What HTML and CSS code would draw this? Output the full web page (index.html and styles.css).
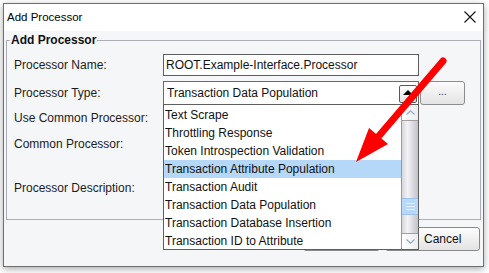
FILE: index.html
```html
<!DOCTYPE html>
<html lang="en">
<head>
    <meta charset="UTF-8">
    <title>Add Processor</title>
    <link rel="stylesheet" href="styles.css">
</head>
<body>
    <div class="window">
        <div class="titlebar">
            <span class="title">Add Processor</span>
            <svg class="close" width="12" height="12" viewBox="0 0 12 12">
                <path d="M0.5 0.5 L11.5 11.5 M11.5 0.5 L0.5 11.5" stroke="#111" stroke-width="1.1" fill="none"/>
            </svg>
        </div>
        <div class="body">
            <fieldset class="group">
                <legend>Add Processor</legend>
                <div class="row row-name">
                    <label>Processor Name:</label>
                    <div class="field">ROOT.Example-Interface.Processor</div>
                </div>
                <div class="row row-type">
                    <label>Processor Type:</label>
                    <div class="combo">
                        <span class="combo-text">Transaction Data Population</span>
                        <span class="combo-btn"><span class="tri-up"></span></span>
                        <div class="dropdown">
                            <ul class="options">
                                <li>Text Scrape</li>
                                <li>Throttling Response</li>
                                <li>Token Introspection Validation</li>
                                <li class="selected">Transaction Attribute Population</li>
                                <li>Transaction Audit</li>
                                <li>Transaction Data Population</li>
                                <li>Transaction Database Insertion</li>
                                <li>Transaction ID to Attribute</li>
                            </ul>
                            <div class="scrollbar">
                                <div class="sb-btn">
                                    <svg width="9" height="5" viewBox="0 0 9 5"><polyline points="0.5,4.5 4.5,0.8 8.5,4.5" fill="none" stroke="#93abc6" stroke-width="1.2"/></svg>
                                </div>
                                <div class="sb-track">
                                    <div class="sb-thumb"><i></i><i></i><i></i></div>
                                </div>
                                <div class="sb-btn">
                                    <svg width="9" height="5" viewBox="0 0 9 5"><polyline points="0.5,0.5 4.5,4.2 8.5,0.5" fill="none" stroke="#93abc6" stroke-width="1.2"/></svg>
                                </div>
                            </div>
                        </div>
                    </div>
                    <button class="more">...</button>
                </div>
                <div class="row row-common">
                    <label>Use Common Processor:</label>
                </div>
                <div class="row row-cproc">
                    <label>Common Processor:</label>
                </div>
                <div class="row row-desc">
                    <label>Processor Description:</label>
                </div>
            </fieldset>
            <div class="actions">
                <button class="btn btn-ok">OK</button>
                <button class="btn btn-cancel">Cancel</button>
            </div>
        </div>
    </div>

    <svg class="pointer" width="489" height="273" viewBox="0 0 489 273">
        <line x1="443" y1="61" x2="378" y2="137" stroke="#ff0000" stroke-width="7" stroke-linecap="round"/>
        <polygon points="356,162 369,128 388,144" fill="#ff0000"/>
    </svg>
</body>
</html>
```

FILE: styles.css
```css
* {
    margin: 0;
    padding: 0;
    box-sizing: border-box;
    font-family: "Liberation Sans", Arial, sans-serif;
}
body {
    position: relative;
    width: 489px;
    height: 273px;
    padding: 3px 0 0 3px;
    background: #ffffff;
    overflow: hidden;
}
.window {
    width: 481px;
    height: 264px;
    border: 1px solid #6f6f6f;
    background: #f5f6f8;
    box-shadow: 0 2px 7px rgba(0, 0, 0, 0.35);
    display: flex;
    flex-direction: column;
}
.titlebar {
    height: 27px;
    background: #ffffff;
    display: flex;
    align-items: center;
    justify-content: space-between;
    padding: 0 7px 0 3px;
}
.title {
    font-size: 11.5px;
    color: #000;
    margin-top: -1px;
}
.close {
    margin-top: -1px;
}
.body {
    flex: 1;
    padding-top: 1px;
}
.group {
    margin: 0 2px;
    border: 1px solid #abadb8;
    padding: 6px 7px 22px 7px;
}
.group legend {
    font-size: 12px;
    font-weight: bold;
    line-height: 16px;
    color: #111;
    padding: 0 1px;
    margin-left: -4px;
}
.row {
    display: flex;
    align-items: center;
}
.row label {
    width: 149px;
    font-size: 12px;
    color: #1c1c1c;
}
.row-name {
    height: 22px;
    margin-bottom: 5px;
}
.row-type {
    height: 24px;
}
.row-common {
    height: 18px;
    margin-top: 4px;
}
.row-cproc {
    height: 18px;
    margin-top: 8px;
}
.row-desc {
    height: 18px;
    margin-top: 26px;
}
.field {
    width: 256px;
    height: 22px;
    border: 1px solid #5e5e5e;
    background: #fff;
    font-size: 12px;
    color: #111;
    padding-left: 2px;
    line-height: 20px;
}
.combo {
    position: relative;
    width: 256px;
    height: 24px;
    border: 1px solid #6a6a6a;
    background: #fff;
    display: flex;
    align-items: center;
    justify-content: space-between;
    padding: 0 1px 0 3px;
}
.combo-text {
    font-size: 12px;
    color: #111;
}
.combo-btn {
    width: 18px;
    height: 18px;
    border: 1px solid #5a5a5a;
    border-radius: 2px;
    background: linear-gradient(#ffffff, #e2e2e2);
    display: flex;
    align-items: center;
    justify-content: center;
    margin-top: 1px;
}
.tri-up {
    width: 0;
    height: 0;
    border-left: 5px solid transparent;
    border-right: 5px solid transparent;
    border-bottom: 5px solid #000;
    margin-top: -2px;
}
.more {
    width: 45px;
    height: 24px;
    margin-left: 1px;
    border: 1px solid #8c8c8c;
    border-radius: 3px;
    background: linear-gradient(#fbfbfb, #e4e4e4);
    font-size: 10px;
    color: #2a2a55;
    padding-bottom: 3px;
}
.dropdown {
    position: absolute;
    left: -1px;
    top: 22px;
    width: 256px;
    height: 146px;
    border: 1px solid #5e5e5e;
    background: #fff;
    display: flex;
    z-index: 3;
}
.options {
    flex: 1;
    list-style: none;
    padding-top: 1px;
}
.options li {
    height: 18px;
    line-height: 18px;
    font-size: 12px;
    color: #111;
    padding-left: 1px;
    white-space: nowrap;
}
.options li.selected {
    background: #b5d7f8;
}
.scrollbar {
    width: 17px;
    display: flex;
    flex-direction: column;
    border-left: 1px solid #9a9a9a;
}
.sb-btn {
    height: 16px;
    background: linear-gradient(to right, #ffffff, #ececef);
    border-bottom: 1px solid #a0a0a0;
    display: flex;
    align-items: center;
    justify-content: center;
}
.sb-btn:last-child {
    border-bottom: none;
    border-top: 1px solid #a0a0a0;
}
.sb-track {
    flex: 1;
    background: linear-gradient(to right, #d6d6dc, #f3f3f6 35%, #c2c2ca);
    padding-top: 77px;
}
.sb-thumb {
    height: 17px;
    background: #b7d8fb;
    border-top: 1px solid #9cc3ec;
    border-bottom: 1px solid #9cc3ec;
    display: flex;
    flex-direction: column;
    align-items: center;
    justify-content: center;
    gap: 2px;
}
.sb-thumb i {
    display: block;
    width: 9px;
    height: 1px;
    background: #e3f0fd;
}
.actions {
    display: flex;
    justify-content: flex-end;
    gap: 5px;
    margin-top: 7px;
    padding-right: 3px;
}
.btn {
    height: 24px;
    border: 1px solid #8a8a8a;
    border-radius: 3px;
    background: linear-gradient(#fdfdfd, #e3e3e3);
    font-size: 12px;
    color: #111;
}
.btn-ok {
    width: 77px;
}
.btn-cancel {
    width: 95px;
    text-align: left;
    padding-left: 38px;
}
.pointer {
    position: absolute;
    left: 0;
    top: 0;
    z-index: 10;
    pointer-events: none;
}
```
